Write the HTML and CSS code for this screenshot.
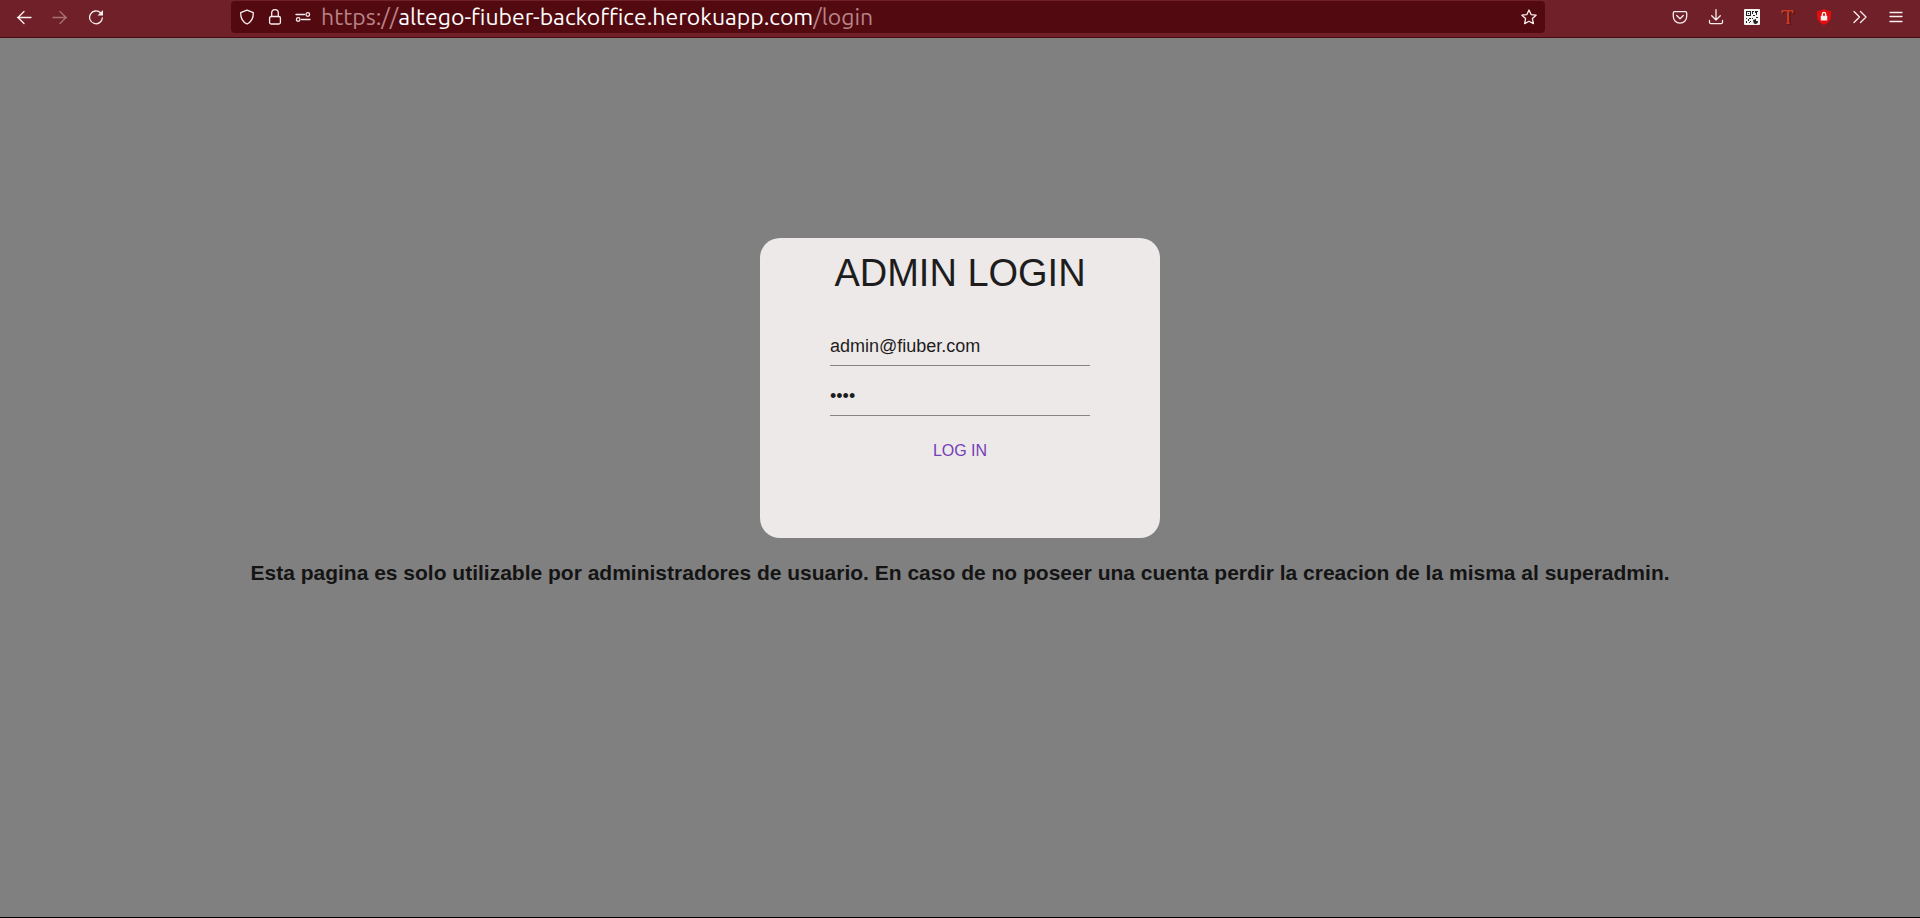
FILE: index.html
```html
<!DOCTYPE html>
<html lang="es">
<head>
<meta charset="utf-8">
<title>Admin Login</title>
<link rel="stylesheet" href="styles.css">
</head>
<body>
<header class="toolbar">
  <nav class="tools">
    <button class="tool" aria-label="Back"><svg class="icon" viewBox="0 0 16 16"><path d="M15 8.500H1.500M8 2.500l-6 6 6 6"/></svg></button>
    <button class="tool faded" aria-label="Forward"><svg class="icon" viewBox="0 0 16 16"><path d="M1 8.500h13.500M8 2.500l6 6-6 6"/></svg></button>
    <button class="tool" aria-label="Reload"><svg class="icon" viewBox="0 0 16 16"><path d="M12.500 3.800A6.400 6.400 0 1 0 14.400 8.800"/><path class="solid plain" d="M15 1v5.500H9.500z"/></svg></button>
  </nav>
  <div class="address">
    <button class="mini" aria-label="Protection"><svg class="icon" viewBox="0 0 16 16"><path d="M8 1.200 14.300 3.700C14.500 9 12 13 8 15 4 13 1.500 9 1.700 3.700z"/></svg></button>
    <button class="mini" aria-label="Security"><svg class="icon" viewBox="0 0 16 16"><rect x="2.600" y="7.500" width="10.800" height="7.500" rx="1.500"/><path d="M4.700 7.500V4a3.300 3.300 0 0 1 6.600 0v3.500"/></svg></button>
    <button class="mini" aria-label="Permissions"><svg class="icon" viewBox="0 0 16 16"><path d="M1 5.500h8.500M6.500 10.500H15"/><circle cx="12.800" cy="5.500" r="1.800"/><circle cx="3.200" cy="10.500" r="1.800"/></svg></button>
    <div class="url">https://<span class="host">altego-fiuber-backoffice.herokuapp.com</span>/login</div>
    <button class="mini" aria-label="Bookmark"><svg class="icon" viewBox="0 0 16 16"><path d="m8 1 2.100 4.600 5 .6-3.700 3.400 1 5L8 12.200l-4.400 2.400 1-5L.900 6.200l5-.6z"/></svg></button>
  </div>
  <nav class="tools">
    <button class="tool" aria-label="Pocket"><svg class="icon" viewBox="0 0 16 16"><path d="M2.500 2.700h11q1.200 0 1.200 1.200V7.500a6.700 6.700 0 0 1-13.400 0V3.900q0-1.200 1.200-1.200zM4.700 6.500 8 9.700l3.300-3.200"/></svg></button>
    <button class="tool" aria-label="Downloads"><svg class="icon" viewBox="0 0 16 16"><path d="M8 .7v10M3.700 6.700 8 11l4.300-4.300M1.500 11.500v1.700q0 1.500 1.500 1.500h10q1.500 0 1.500-1.500v-1.700"/></svg></button>
    <button class="tool" aria-label="QR code"><svg class="icon" viewBox="0 0 16 16"><rect class="qr-page" width="16" height="16" rx="1"/><path class="qr-ink" d="M2 2h5v5H2zM3 3v3h3V3zM4 4h1v1H4zM8 2h2v1H9v2H8zM11 2h3v1h-1v3h-1V4h-1zM9 6h2v1H9zM2 9h1v1H2zM5 9h2v1H5zM4 10h1v2H4zM2 12h1v2H2zM6 12h1v1H6zM5 13h1v1H5zM12 8h2v1h-2zM8 9h1v1H8zM9 11l3-1v2h2q0 3-3 3-2-1-2-4z"/></svg></button>
    <button class="tool" aria-label="Text tool"><svg class="icon" viewBox="0 0 16 16"><path class="tee-shade" d="M2.500 1.500h12v4h-1l-1-2.500h-2v11l1 1.500h-4l1-1.500v-11H5L3.500 5h-1z"/><path class="tee" d="M1.500 1h12v3.500h-1L11.500 2.500H9.300v11l1 1.500H6l1-1.500v-11H3.800L2.500 4.500h-1z"/></svg></button>
    <button class="tool" aria-label="Blocker"><svg class="icon" viewBox="0 0 16 16"><path class="guard" d="M8 0q3.500 2 7 2v5q0 6-7 9-7-3-7-9V2q3.500 0 7-2z"/><rect class="solid plain" x="4.800" y="6.800" width="6.400" height="4.800" rx=".5"/><path d="M6.300 7V5.200a1.700 1.700 0 0 1 3.400 0V7"/></svg></button>
    <button class="tool" aria-label="More tools"><svg class="icon" viewBox="0 0 16 16"><path d="m2 2.500 5.500 5.500L2 13.500M8.500 2.500 14 8l-5.500 5.500"/></svg></button>
    <button class="tool" aria-label="Menu"><svg class="icon" viewBox="0 0 16 16"><path d="M2 3.500h12M2 7.500h12M2 12.500h12"/></svg></button>
  </nav>
</header>
<main class="page">
  <form class="card">
    <h1 class="title">ADMIN LOGIN</h1>
    <input class="field" type="email" aria-label="Email" value="admin@fiuber.com">
    <input class="field" type="password" aria-label="Password" value="1234">
    <button class="submit" type="button">LOG IN</button>
  </form>
  <p class="notice">Esta pagina es solo utilizable por administradores de usuario. En caso de no poseer una cuenta perdir la creacion de la misma al superadmin.</p>
</main>
</body>
</html>
```

FILE: styles.css
```css
* { box-sizing: border-box; }
body {
  margin: 0;
  min-height: 100vh;
  display: flex;
  flex-direction: column;
  background: #808080;
  color: #1d1d1d;
  font-family: "Nimbus Sans", "Liberation Sans", Arial, sans-serif;
}
button {
  padding: 0;
  border: 0;
  background: none;
  color: inherit;
  font: inherit;
}
.toolbar {
  display: flex;
  gap: 117px;
  height: 38px;
  padding: 1px 6px 4px;
  background: #6f2028;
  border-bottom: 1px solid #4b0a10;
  color: #fbeeee;
}
.tools { display: flex; }
.tool, .mini {
  display: flex;
  align-items: center;
  justify-content: center;
  flex: none;
}
.tool { width: 36px; }
.mini { width: 28px; }
.faded { opacity: .4; }
.icon {
  width: 16px;
  height: 16px;
  fill: none;
  stroke: currentColor;
  stroke-width: 1.3;
  stroke-linecap: round;
  stroke-linejoin: round;
}
.solid { fill: currentColor; }
.plain, .qr-page, .qr-ink, .tee, .tee-shade, .guard { stroke: none; }
.qr-page { fill: #f4f4f2; }
.qr-ink { fill: #222; fill-rule: evenodd; }
.tee { fill: #c43a20; }
.tee-shade { fill: #4d1013; }
.guard { fill: #e40d0d; }
.address {
  display: flex;
  align-items: center;
  flex: 1;
  padding: 0 2px;
  border-radius: 4px;
  background: #520a10;
}
.url {
  flex: 1;
  padding-left: 4px;
  color: #b98388;
  font: 23px/30px Ubuntu, "Noto Sans", sans-serif;
  white-space: nowrap;
}
.host { color: #fff; }
.page {
  flex: 1;
  display: flex;
  flex-direction: column;
  align-items: center;
  padding-top: 200px;
  border-bottom: 1px solid #000;
}
.card {
  display: flex;
  flex-direction: column;
  align-items: center;
  width: 400px;
  min-height: 300px;
  padding: 11px 70px;
  border-radius: 20px;
  background: #ede9e8;
}
.title {
  margin: 0 0 27px;
  font-size: 38px;
  font-weight: 400;
  line-height: 48px;
  white-space: nowrap;
}
.field {
  width: 100%;
  height: 42px;
  margin-bottom: 8px;
  padding: 4px 0 0;
  border: 0;
  border-bottom: 1px solid #858383;
  border-radius: 0;
  background: none;
  color: inherit;
  font: 18px "Nimbus Sans", "Liberation Sans", Arial, sans-serif;
  outline: 0;
}
.submit {
  margin-top: 9px;
  padding: 6px 8px;
  color: #7440b8;
  font-size: 16px;
  line-height: 24px;
}
.notice {
  margin: 21px 0;
  color: #141414;
  font-size: 21px;
  font-weight: 700;
  line-height: 28px;
  text-align: center;
}
```
